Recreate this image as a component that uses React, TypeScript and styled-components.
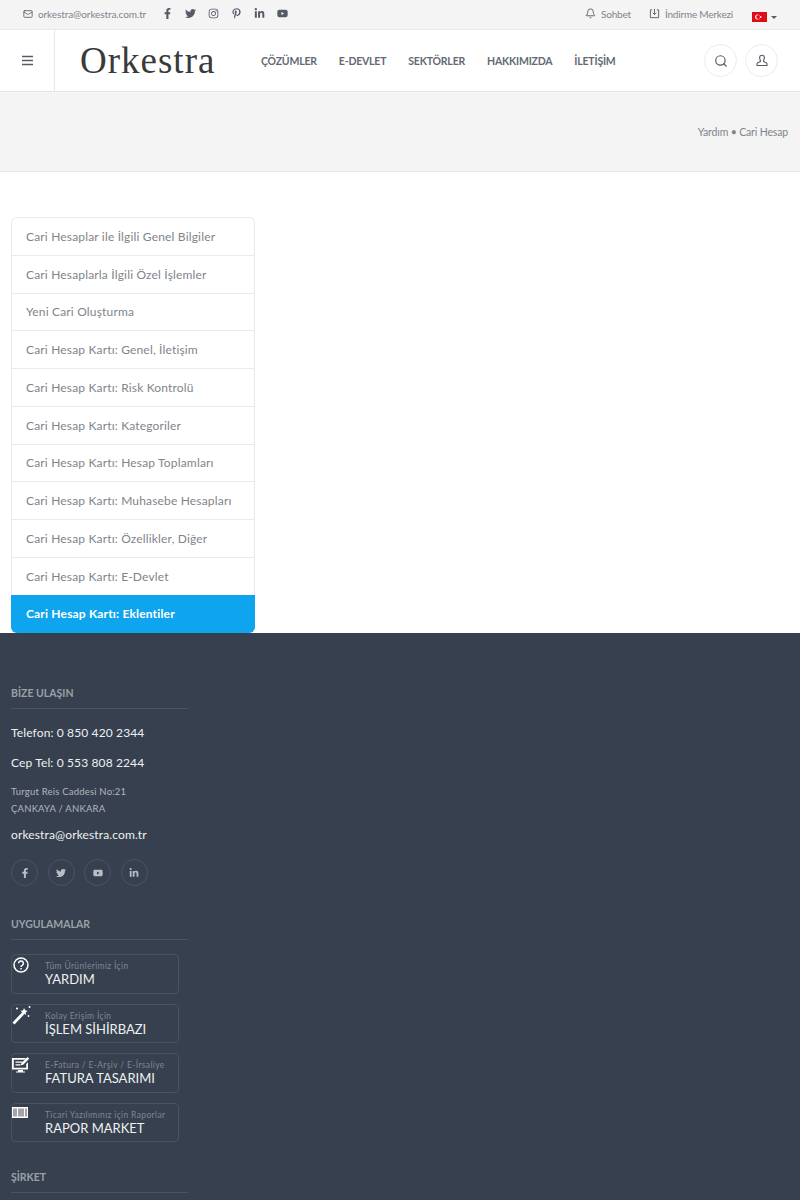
import * as React from "react";
import styled, {createGlobalStyle} from "styled-components";
import {FaFacebookF, FaTwitter, FaInstagram, FaPinterestP, FaLinkedinIn, FaYoutube} from "react-icons/fa";
import {Mail, Bell, Search} from "lucide-react";

const GlobalStyle = createGlobalStyle`
  html, body {
    margin: 0;
    padding: 0;
    height: 1200px;
    overflow: hidden;
    background: #fff;
  }
  * {
    box-sizing: border-box;
  }
  body {
    font-family: "Lato", "Noto Sans", sans-serif;
  }
`

const Page = styled.div`
  width: 800px;
  height: 1200px;
  overflow: hidden;
`

const TopBar = styled.div`
  height: 30px;
  padding: 0 11px 2px 23px;
  display: flex;
  align-items: center;
  background: #f4f4f4;
  border-bottom: 1px solid #e8e8e8;
  color: #7f848b;
  font-size: 10px;
  letter-spacing: -0.1px;
`

const TopMail = styled.span`
  display: flex;
  align-items: center;
  gap: 5px;
  width: 139px;
  svg {
    color: #555c68;
  }
`

const TopSocials = styled.div`
  display: flex;
  align-items: center;
  gap: 12px;
  color: #555c68;
  flex: 1;
  svg {
    width: 11px;
    height: 11px;
  }
`

const TopLink = styled.span<{ gap?: number }>`
  display: flex;
  align-items: center;
  gap: 5px;
  letter-spacing: -0.2px;
  margin-right: ${({gap}) => gap ?? 18}px;
  svg {
    color: #555c68;
  }
`

const Lang = styled.span`
  display: flex;
  align-items: center;
  gap: 4px;
  margin-top: 7px;
  margin-right: 12px;
  i {
    width: 0;
    height: 0;
    border-left: 3px solid transparent;
    border-right: 3px solid transparent;
    border-top: 3px solid #555c68;
  }
`

const Header = styled.header`
  height: 62px;
  display: flex;
  align-items: center;
  background: #fff;
  border-bottom: 1px solid #e4e4e4;
`

const Burger = styled.div`
  width: 55px;
  height: 100%;
  display: flex;
  align-items: center;
  justify-content: center;
  border-right: 1px solid #e8e8e8;
  color: #555c68;
`

const Logo = styled.div`
  width: 206px;
  padding-left: 25px;
  font-family: "Liberation Serif", serif;
  font-size: 37px;
  line-height: 38px;
  letter-spacing: 1px;
  color: #3a3a3a;
`

const Nav = styled.nav`
  flex: 1;
  display: flex;
  gap: 22px;
  color: #636973;
  font-size: 10.5px;
  font-weight: 700;
  letter-spacing: -0.2px;
`

const HeaderButton = styled.div`
  width: 33px;
  height: 33px;
  margin-right: 8px;
  border: 1px solid #ebebeb;
  border-radius: 50%;
  display: flex;
  align-items: center;
  justify-content: center;
  color: #555c68;
  &:last-child {
    margin-right: 22px;
  }
`

const TitleBand = styled.div`
  height: 80px;
  padding: 0 12px 0 0;
  display: flex;
  align-items: center;
  justify-content: flex-end;
  background: #f4f4f4;
  border-bottom: 1px solid #e8e8e8;
  color: #7f848b;
  font-size: 10.5px;
  letter-spacing: -0.15px;
`

const Content = styled.main`
  height: 461px;
  padding: 45px 0 0 11px;
`

const SideList = styled.ul`
  list-style: none;
  margin: 0;
  padding: 0;
  width: 244px;
  border: 1px solid #eaeaea;
  border-bottom: none;
  border-radius: 6px;
  background: #fff;
`

const SideItem = styled.li<{ active?: boolean }>`
  height: ${({active}) => active ? 38.75 : 37.75}px;
  padding-left: ${({active}) => active ? 15 : 14}px;
  display: flex;
  align-items: center;
  font-size: 12px;
  letter-spacing: 0.17px;
  color: ${({active}) => active ? "#fff" : "#7f848b"};
  font-weight: ${({active}) => active ? 700 : 400};
  background: ${({active}) => active ? "#0ea5ee" : "transparent"};
  border-top: ${({active}) => active ? "none" : "1px solid #eaeaea"};
  margin: ${({active}) => active ? "0 -1px" : "0"};
  border-radius: ${({active}) => active ? "0 0 6px 6px" : "0"};
  &:first-child {
    height: 36.75px;
    border-top: none;
  }
`

const Footer = styled.footer`
  height: 567px;
  padding: 53px 0 0 11px;
  background: #36404e;
  color: #fff;
`

const Column = styled.div`
  width: 177px;
`

const ColumnTitle = styled.h4<{ top?: number }>`
  margin: ${({top}) => top ?? 0}px 0 0;
  height: 23px;
  border-bottom: 1px solid #4a5462;
  color: #99a0a9;
  font-size: 10.5px;
  font-weight: 700;
  line-height: 14px;
`

const Phone = styled.div<{ top: number }>`
  margin-top: ${({top}) => top}px;
  color: #eef0f2;
  font-size: 12px;
  line-height: 16px;
  letter-spacing: 0.13px;
  white-space: nowrap;
`

const Address = styled.div`
  margin-top: 12px;
  color: #b2b7be;
  font-size: 9.5px;
  line-height: 17px;
  letter-spacing: 0.2px;
`

const CircleRow = styled.div`
  margin-top: 16px;
  display: flex;
  gap: 9.5px;
`

const Circle = styled.span`
  width: 27px;
  height: 27px;
  border: 1px solid #4a5462;
  border-radius: 50%;
  display: flex;
  align-items: center;
  justify-content: center;
  color: #b9bec5;
  svg {
    width: 10px;
    height: 10px;
  }
`

const AppList = styled.div`
  margin-top: 14px;
  display: flex;
  flex-direction: column;
  gap: 10px;
  margin-bottom: 28px;
`

const AppCard = styled.div`
  position: relative;
  width: 168px;
  height: 39.6px;
  padding: 6px 0 0 33px;
  border: 1px solid #485261;
  border-radius: 4px;
  white-space: nowrap;
`

const AppIcon = styled.svg`
  position: absolute;
  left: -1px;
  top: 0;
  width: 20px;
  height: 20px;
`

const AppHint = styled.div`
  color: #7f8792;
  font-size: 8.5px;
  line-height: 11px;
  letter-spacing: 0.35px;
`

const AppName = styled.div`
  margin-top: -1px;
  color: #eef0f2;
  font-size: 13px;
  line-height: 16px;
`

const menuItems = [
  "Cari Hesaplar ile İlgili Genel Bilgiler",
  "Cari Hesaplarla İlgili Özel İşlemler",
  "Yeni Cari Oluşturma",
  "Cari Hesap Kartı: Genel, İletişim",
  "Cari Hesap Kartı: Risk Kontrolü",
  "Cari Hesap Kartı: Kategoriler",
  "Cari Hesap Kartı: Hesap Toplamları",
  "Cari Hesap Kartı: Muhasebe Hesapları",
  "Cari Hesap Kartı: Özellikler, Diğer",
  "Cari Hesap Kartı: E-Devlet",
]

const navItems = ["ÇÖZÜMLER", "E-DEVLET", "SEKTÖRLER", "HAKKIMIZDA", "İLETİŞİM"]

const BurgerIcon = () => (
  <svg width="13" height="11" viewBox="0 0 13 11" fill="none" stroke="currentColor" strokeWidth="1.4">
    <path d="M1 1.500h11M1 5.500h11M1 9.500h11"/>
  </svg>
)

const Flag = () => (
  <svg width="15" height="10" viewBox="0 0 15 10">
    <rect width="15" height="10" fill="#e30a17"/>
    <circle cx="5.6" cy="5" r="2.5" fill="#fff"/>
    <circle cx="6.2" cy="5" r="2" fill="#e30a17"/>
    <circle cx="8.6" cy="5" r="0.9" fill="#fff"/>
  </svg>
)

const DownloadBox = () => (
  <svg width="11" height="11" viewBox="0 0 12 12" fill="none" stroke="currentColor" strokeWidth="1">
    <path d="M3.500 2H1.500v8.500h9V2H8.500"/>
    <path d="M6 1v6M4 5.200 6 7.200l2-2"/>
  </svg>
)

const UserIcon = () => (
  <svg width="14" height="14" viewBox="0 0 14 14" fill="none" stroke="currentColor" strokeWidth="1.1">
    <path d="M4.600 3.600a2.400 2.400 0 0 1 4.800 0c0 1.600-.8 2.500-1 3.600 0 .7 3.600 1 3.600 2.600v1.700H2v-1.700c0-1.600 3.600-1.900 3.600-2.600-.2-1.100-1-2-1-3.600z"/>
  </svg>
)

const HelpIcon = () => (
  <AppIcon viewBox="0 0 20 20" fill="none" stroke="#fff">
    <circle cx="10" cy="10" r="7" strokeWidth="1.5"/>
    <path d="M7.600 8.300a2.400 2.400 0 1 1 3.600 2.100c-.8.400-1.200.9-1.200 1.600" strokeWidth="1.500"/>
    <path d="M10 13v1.400" strokeWidth="1.500"/>
  </AppIcon>
)

const WandIcon = () => (
  <AppIcon viewBox="0 0 20 20" fill="#fff">
    <path d="M1.500 17.500 11 7.500l2 2-9.500 10z"/>
    <path d="M13 3l1.200 2.300 2.400.6-1.900 1.600.3 2.500-2-1.300-2.300 1.200.6-2.400-1.800-1.800 2.500-.1z"/>
    <circle cx="6" cy="3.500" r="1.100"/>
    <circle cx="18.500" cy="2" r="1"/>
    <circle cx="17.500" cy="11" r="0.900"/>
  </AppIcon>
)

const InvoiceIcon = () => (
  <AppIcon viewBox="0 0 20 20" fill="#fff">
    <path d="M1 4h14l-1.600 1.800H2.800v8h12.400V10l1.800-1.800V15.500H1z"/>
    <path d="M4.500 7.500h7v1.200h-7zM4.500 10.200h5v1.200h-5z"/>
    <path d="M7 16h5v1.400h2v1H5v-1h2z"/>
    <path d="M16.500 3 18.200 4.700l-6 6-2.400.6.600-2.400z"/>
  </AppIcon>
)

const BarcodeIcon = () => (
  <AppIcon viewBox="0 0 20 20">
    <rect x="1" y="3" width="16" height="11" fill="#fff"/>
    <path d="M3 4.500v8M5 4.500v8M8 4.500v8M10 4.500v8M12 4.500v8M15 4.500v8" stroke="#4a4a52" strokeWidth="1"/>
  </AppIcon>
)

const apps = [
  {hint: "Tüm Ürünlerimiz İçin", name: "YARDIM", icon: <HelpIcon/>},
  {hint: "Kolay Erişim İçin", name: "İŞLEM SİHİRBAZI", icon: <WandIcon/>},
  {hint: "E-Fatura / E-Arşiv / E-İrsaliye", name: "FATURA TASARIMI", icon: <InvoiceIcon/>},
  {hint: "Ticari Yazılımınız için Raporlar", name: "RAPOR MARKET", icon: <BarcodeIcon/>},
]

const App = () => (
  <Page>
    <GlobalStyle/>
    <TopBar>
      <TopMail><Mail size={10}/>orkestra@orkestra.com.tr</TopMail>
      <TopSocials>
        <FaFacebookF/>
        <FaTwitter/>
        <FaInstagram/>
        <FaPinterestP/>
        <FaLinkedinIn/>
        <FaYoutube/>
      </TopSocials>
      <TopLink><Bell size={11}/>Sohbet</TopLink>
      <TopLink gap={19}><DownloadBox/>İndirme Merkezi</TopLink>
      <Lang><Flag/><i/></Lang>
    </TopBar>
    <Header>
      <Burger><BurgerIcon/></Burger>
      <Logo>Orkestra</Logo>
      <Nav>
        {navItems.map(item => <span key={item}>{item}</span>)}
      </Nav>
      <HeaderButton><Search size={14}/></HeaderButton>
      <HeaderButton><UserIcon/></HeaderButton>
    </Header>
    <TitleBand>Yardım • Cari Hesap</TitleBand>
    <Content>
      <SideList>
        {menuItems.map(item => <SideItem key={item}>{item}</SideItem>)}
        <SideItem active>Cari Hesap Kartı: Eklentiler</SideItem>
      </SideList>
    </Content>
    <Footer>
      <Column>
        <ColumnTitle>BİZE ULAŞIN</ColumnTitle>
        <Phone top={16}>Telefon: 0 850 420 2344</Phone>
        <Phone top={14}>Cep Tel: 0 553 808 2244</Phone>
        <Address>Turgut Reis Caddesi No:21<br/>ÇANKAYA / ANKARA</Address>
        <Phone top={10}>orkestra@orkestra.com.tr</Phone>
        <CircleRow>
          <Circle><FaFacebookF/></Circle>
          <Circle><FaTwitter/></Circle>
          <Circle><FaYoutube/></Circle>
          <Circle><FaLinkedinIn/></Circle>
        </CircleRow>
        <ColumnTitle top={31}>UYGULAMALAR</ColumnTitle>
        <AppList>
          {apps.map(app => (
            <AppCard key={app.name}>
              {app.icon}
              <AppHint>{app.hint}</AppHint>
              <AppName>{app.name}</AppName>
            </AppCard>
          ))}
        </AppList>
        <ColumnTitle>ŞİRKET</ColumnTitle>
      </Column>
    </Footer>
  </Page>
)

export default App
